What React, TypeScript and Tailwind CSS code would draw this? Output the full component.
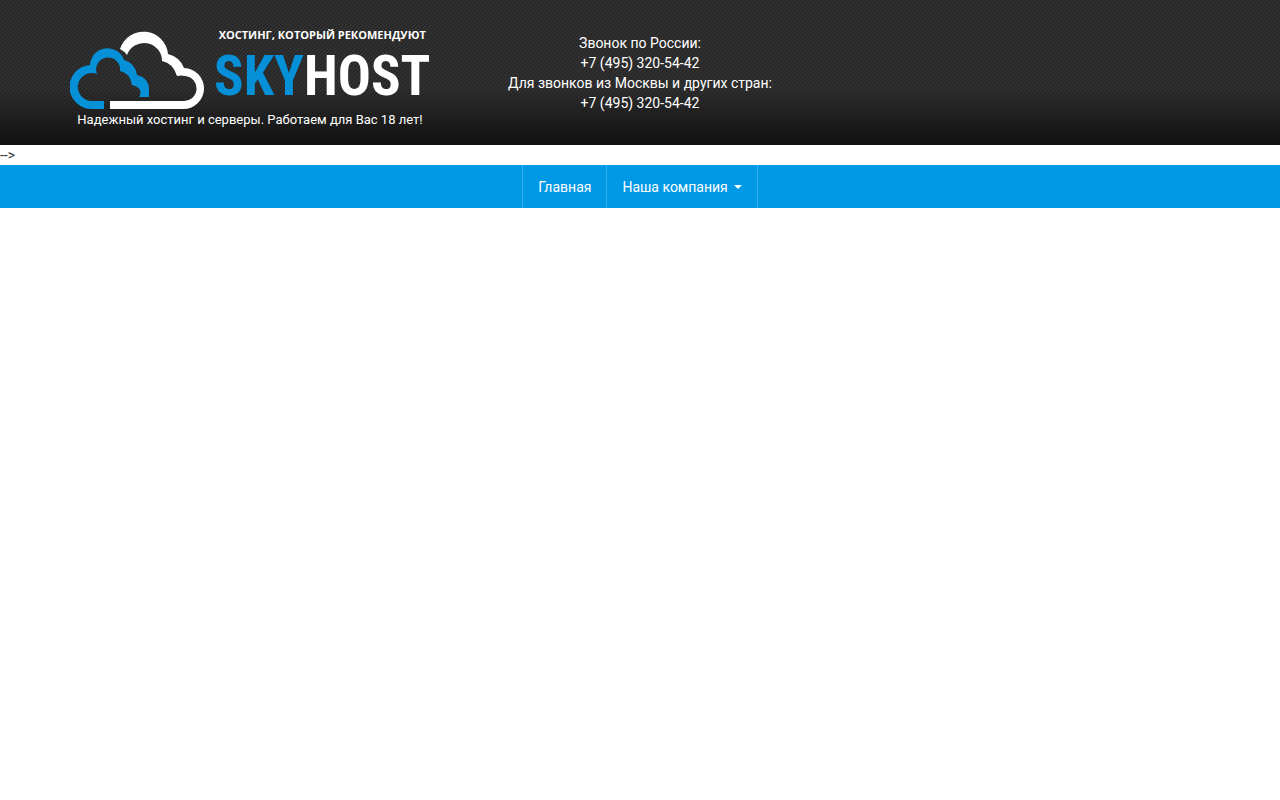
import type { ReactNode } from "react"

const phones = [
  { label: "Звонок по России:", number: "+7 (495) 320-54-42" },
  { label: "Для звонков из Москвы и других стран:", number: "+7 (495) 320-54-42" },
]

function Clouds() {
  return (
    <svg viewBox="0 0 134 80" className="h-20 w-[134px] shrink-0" aria-hidden="true">
      <path
        d="M50 19A24.600 24.600 0 0 1 98 24Q110 27 114 38A20.500 20.500 0 0 1 113 79H40V71H113A12.500 12.500 0 0 0 115 46Q111 45 107 46Q103 33 92 31A18 18 0 0 0 57 25Q54 21 50 19Z"
        fill="#fff"
      />
      <path
        d="M34 79H23A22 22 0 0 1 20 35A17.500 17.500 0 0 1 54 30Q65 33 67 45Q79 48 79 60V67H69Q74 58 62 55Q60 43 50 41A12 12 0 1 0 27 44A14 14 0 1 0 22 71H34Z"
        fill="#0590d8"
      />
    </svg>
  )
}

function Logo() {
  return (
    <a href="#" className="flex items-center gap-2.5 text-white" aria-label="SkyHost">
      <Clouds />
      <span className="flex grow flex-col items-center whitespace-nowrap">
        <span className="font-['Open_Sans',sans-serif] text-[11px] leading-3 font-bold">
          ХОСТИНГ, КОТОРЫЙ РЕКОМЕНДУЮТ
        </span>
        <span className="font-['Roboto_Condensed',Roboto,sans-serif] text-[55px] leading-[70px] font-bold">
          <span className="text-[#0590d8]">SKY</span>HOST
        </span>
      </span>
    </a>
  )
}

function NavItem({ children }: { children: ReactNode }) {
  return (
    <li className="border-r border-[#33b1ee] first:border-l">
      <a href="#" className="flex h-[43px] items-center px-[15px] text-white">
        {children}
      </a>
    </li>
  )
}

export default function App() {
  return (
    <div className="min-h-screen bg-white font-[Roboto,sans-serif] text-sm leading-5 text-[#333]">
      <header className="bg-[linear-gradient(to_bottom,transparent_60%,#131313_98%),linear-gradient(135deg,#272727_25%,#323232_25%,#323232_50%,#272727_50%,#272727_75%,#323232_75%)] bg-[size:100%_100%,4px_4px] text-white">
        <div className="mx-auto grid min-h-[145px] max-w-[1170px] grid-cols-3">
          <div className="px-[15px] pt-[29px]">
            <Logo />
            <p className="text-center text-[13px] leading-[18px] whitespace-nowrap">
              Надежный хостинг и серверы. Работаем для Вас 18 лет!
            </p>
          </div>
          <div className="px-[15px] pt-[33px] text-center">
            {phones.map((p) => (
              <div key={p.label}>
                <div>{p.label}</div>
                <div>{p.number}</div>
              </div>
            ))}
          </div>
        </div>
      </header>
      <div>{"-->"}</div>
      <nav className="bg-[#0099e5]">
        <ul className="flex justify-center">
          <NavItem>Главная</NavItem>
          <NavItem>
            Наша компания
            <span className="ml-1.5 border-x-4 border-t-4 border-x-transparent border-t-white" />
          </NavItem>
        </ul>
      </nav>
    </div>
  )
}
